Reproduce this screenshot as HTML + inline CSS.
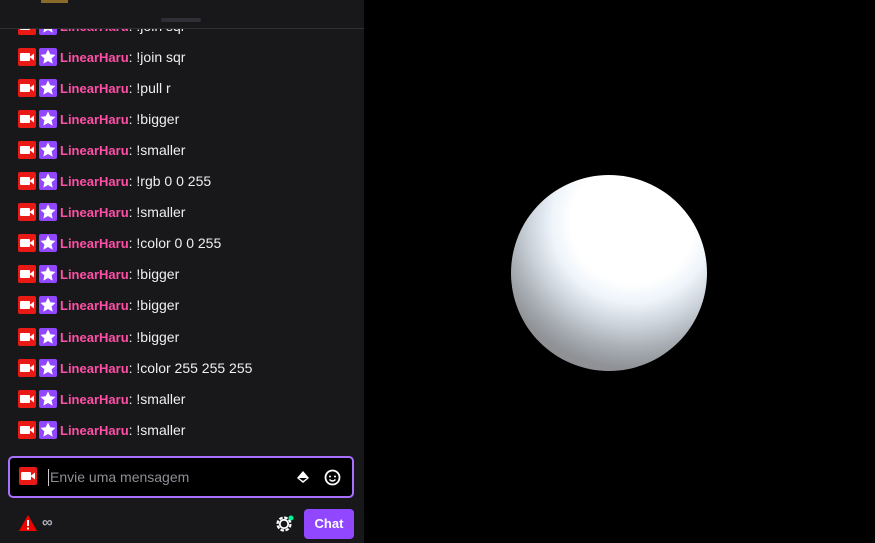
<!DOCTYPE html>
<html><head><style>
body{margin:0;width:875px;height:543px;background:#000;overflow:hidden;font-family:"Liberation Sans",sans-serif;position:relative}
#p{position:absolute;left:0;top:0;width:364px;height:543px;background:#18181b}
.sep{position:absolute;left:0;top:28px;width:364px;height:1px;background:#2f2f35}
.hd{position:absolute;left:161px;top:18px;width:40px;height:4px;border-radius:2px;background:#2f2f35}
.gold{position:absolute;left:41px;top:0;width:27px;height:3px;background:#8a6a2a}
.m{position:absolute;left:18px;height:20px;font-size:14px;color:#efeff1;line-height:20px;white-space:nowrap}
.b{display:inline-block;width:18px;height:18px;border-radius:2px;vertical-align:-4px;position:relative;margin-right:3px}
.r{background:#e91916}.pu{background:#9146ff}
.n{color:#ff4fa7;font-weight:bold;font-size:13px}
#box{position:absolute;left:8px;top:456px;width:342px;height:38px;border:2px solid #a970ff;border-radius:5px;background:#000}
#chat{position:absolute;left:304px;top:509px;width:50px;height:30px;background:#9147ff;border-radius:4px;color:#fff;font-weight:bold;font-size:13px;line-height:30px;text-align:center}
#sph{position:absolute;left:511px;top:175px;width:196px;height:196px;border-radius:50%;background:radial-gradient(circle at 62% 24%,#fff 0,#fff 32%,#eef4fa 42%,#ccd3db 54%,#aab0b6 65%,#909296 76%,#86878a 100%)}
</style></head><body>
<div id="p">
<div class="gold"></div><div class="hd"></div><div class="sep"></div>
<svg width="0" height="0" style="position:absolute"><defs>
<g id="cam"><rect x="2" y="5" width="10" height="8" rx="1" fill="#fff"/><path d="M11.5 9l4.5-3.5v7z" fill="#fff"/></g>
<g id="star"><path d="M9 1.5l2.3 4.8 5.2.6-3.9 3.5 1.1 5.2L9 13 4.3 15.6l1.1-5.2L1.5 6.9l5.2-.6z" fill="#fff"/></g>
</defs></svg>
<div id="msgs"></div>
<div id="box">
<span class="b r" style="position:absolute;left:9px;top:9px"><svg width="18" height="18" style="position:absolute;left:0;top:0"><use href="#cam"/></svg></span>
<div style="position:absolute;left:38px;top:11px;width:1px;height:17px;background:#ccc"></div>
<div style="position:absolute;left:40px;top:11px;color:#8e8e95;font-size:14px">Envie uma mensagem</div>
<svg style="position:absolute;left:285px;top:11px" width="16" height="16" viewBox="0 0 16 16"><path d="M8 2l6 7-6 5-6-5z" fill="#fff"/><path d="M4 9h8l-4 3z" fill="#000"/></svg>
<svg style="position:absolute;left:314px;top:11px" width="17" height="17" viewBox="0 0 17 17"><circle cx="8.5" cy="8.5" r="7" fill="none" stroke="#fff" stroke-width="1.8"/><circle cx="6" cy="7.5" r="1" fill="#fff"/><circle cx="11" cy="7.5" r="1" fill="#fff"/><path d="M5.5 10.5q3 3 6 0" fill="none" stroke="#fff" stroke-width="1.5"/></svg>
</div>
<svg style="position:absolute;left:18px;top:514px" width="20" height="18" viewBox="0 0 20 18"><path d="M10 1l9 16H1z" fill="#eb0400"/><rect x="9" y="6" width="2" height="6" fill="#fff"/><rect x="9" y="13.5" width="2" height="2" fill="#fff"/></svg>
<div style="position:absolute;left:42px;top:514px;color:#adadb8;font-size:15px;font-weight:bold">∞</div>
<svg style="position:absolute;left:275px;top:514px" width="20" height="20" viewBox="0 0 20 20"><circle cx="9" cy="10" r="6.5" fill="none" stroke="#fff" stroke-width="2.2" stroke-dasharray="3.5 1.6"/><circle cx="9" cy="10" r="4.2" fill="none" stroke="#fff" stroke-width="1.8"/><circle cx="16" cy="4" r="2.5" fill="#00f593"/></svg>
<div id="chat">Chat</div>
</div>
<div id="sph"></div>
<script>
var t=["!join sqr","!join sqr","!pull r","!bigger","!smaller","!rgb 0 0 255","!smaller","!color 0 0 255","!bigger","!bigger","!bigger","!color 255 255 255","!smaller","!smaller"];
var ys=[16,47,78,109,140,171,202,233,264,295,327,358,389,420],h="";
for(var i=0;i<t.length;i++){h+='<div class="m" style="top:'+ys[i]+'px'+(i==0?';clip-path:inset(13px 0 0 0)':'')+'"><span class="b r"><svg width="18" height="18" style="position:absolute;left:0;top:0"><use href="#cam"/></svg></span><span class="b pu"><svg width="18" height="18" style="position:absolute;left:0;top:0"><use href="#star"/></svg></span><span class="n">LinearHaru</span>: '+t[i]+'</div>';}
document.getElementById("msgs").innerHTML=h;
</script>
</body></html>
